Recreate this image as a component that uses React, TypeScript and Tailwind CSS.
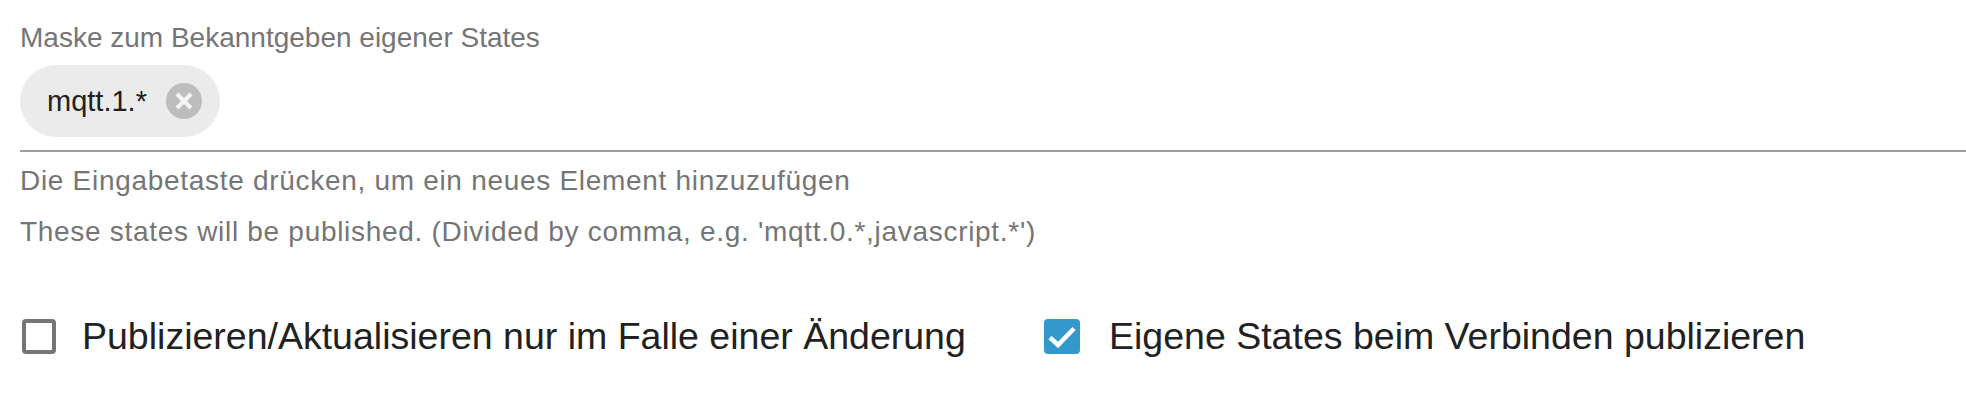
import React from "react";

const font = { fontFamily: '"Liberation Sans", Arial, Helvetica, sans-serif' };

const Chip = ({ label }: { label: string }) => (
    <div className="inline-flex h-[72px] items-center rounded-full bg-[#ebebeb] pl-[27px] pr-[18px]">
        <span className="text-[29px] leading-none text-[#212121]">{label}</span>
        <svg className="ml-[19px] h-[36px] w-[36px]" viewBox="0 0 36 36">
            <circle cx="18" cy="18" r="18" fill="#bdbdbd" />
            <path d="M11 11 L25 25 M25 11 L11 25" stroke="#f4f4f4" strokeWidth="4" />
        </svg>
    </div>
);

const Box = ({ checked }: { checked: boolean }) =>
    checked ? (
        <svg className="h-[35px] w-[36px]" viewBox="0 0 36 35">
            <rect x="0" y="0" width="36" height="35" rx="4" fill="#3399cc" />
            <path d="M6 18.5 L14 26 L30 9.5" fill="none" stroke="#ffffff" strokeWidth="4.5" />
        </svg>
    ) : (
        <div className="h-[35px] w-[34px] rounded-[4px] border-[4px] border-[#757575]" />
    );

export default function App() {
    return (
        <div className="min-h-[408px] w-full bg-white pl-[20px] pt-[22px]" style={font}>
            {/* chip input */}
            <div className="text-[28px] leading-[32px] text-[#757575]">Maske zum Bekanntgeben eigener States</div>
            <div className="mt-[11px] border-b-2 border-[#9e9e9e] pb-[13px]">
                <Chip label="mqtt.1.*" />
            </div>
            <div className="mt-[13px] text-[28px] leading-[32px] tracking-[0.7px] text-[#757575]">
                Die Eingabetaste drücken, um ein neues Element hinzuzufügen
            </div>
            <div className="mt-[19px] text-[28px] leading-[32px] tracking-[0.7px] text-[#757575]">
                These states will be published. (Divided by comma, e.g. 'mqtt.0.*,javascript.*')
            </div>

            {/* options */}
            <div className="mt-[67px] flex items-center pl-[2px]">
                <label className="flex w-[1022px] items-center gap-[26px]">
                    <Box checked={false} />
                    <span className="text-[37.5px] leading-[42px] text-[#212121]">
                        Publizieren/Aktualisieren nur im Falle einer Änderung
                    </span>
                </label>
                <label className="flex items-center gap-[29px]">
                    <Box checked={true} />
                    <span className="text-[37.5px] leading-[42px] text-[#212121]">Eigene States beim Verbinden publizieren</span>
                </label>
            </div>
        </div>
    );
}
